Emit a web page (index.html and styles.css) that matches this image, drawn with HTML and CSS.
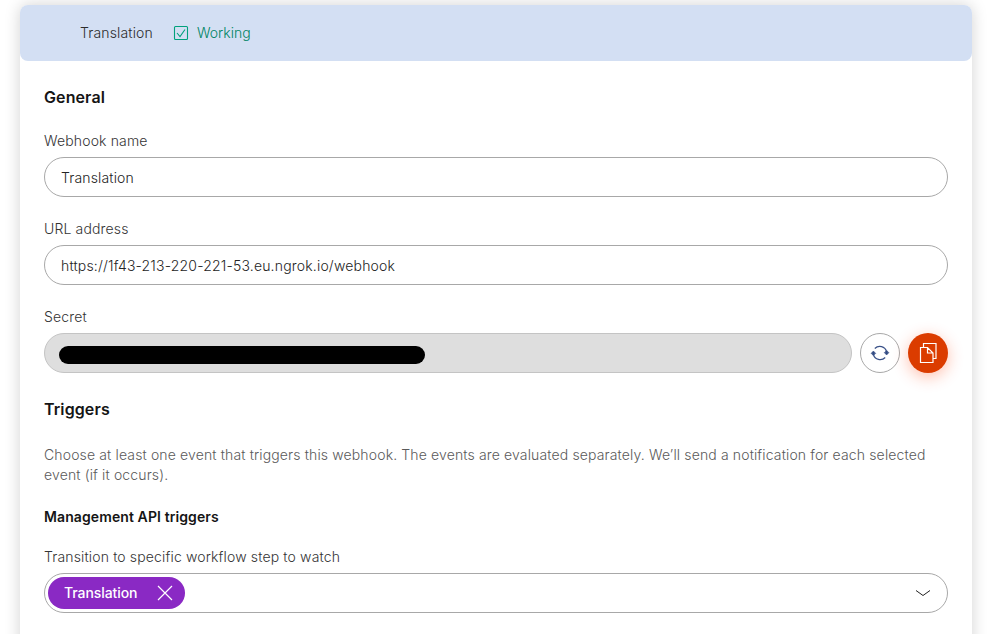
FILE: index.html
```html
<!DOCTYPE html>
<html lang="en">
<head>
<meta charset="utf-8">
<title>Webhook</title>
<link rel="stylesheet" href="styles.css">
</head>
<body>
<main class="card">
  <header class="bar">
    <span class="bar-name">Translation</span>
    <svg class="check" width="16" height="16" viewBox="0 0 16 16"><rect x="1.500" y="1.500" width="13" height="13" rx="1"/><path d="m4 8 3 3.500 5-7"/></svg>
    <span class="status">Working</span>
  </header>
  <div class="content">
    <h2>General</h2>
    <label>Webhook name</label>
    <div class="field">Translation</div>
    <label>URL address</label>
    <div class="field url">https://1f43-213-220-221-53.eu.ngrok.io/webhook</div>
    <label>Secret</label>
    <div class="secret-row">
      <div class="field disabled"><span class="redaction"></span></div>
      <button class="round" aria-label="Regenerate"><svg width="20" height="18" viewBox="0 0 20 18"><path d="M4.800 4.500A7 7 0 0 1 16.600 7.500M15.200 13.500A7 7 0 0 1 3.400 10.500"/><path class="head" d="M1 9.500 3.400 7l2.400 2.500-1.400.3v1.200h-2V9.800zM14.200 8.500l1.400-.3V7h2v1.200l1.400.3-2.400 2.500z"/></svg></button>
      <button class="round copy" aria-label="Copy"><svg width="18" height="20" viewBox="0 0 18 20"><path d="M1.500 4.500h7l5.500 5.500v9.500H1.500zM8.500 4.500V10H14M4.500 4.500V.500h12.500v15H14"/></svg></button>
    </div>
    <h2 class="triggers">Triggers</h2>
    <p>Choose at least one event that triggers this webhook. The events are evaluated separately. We’ll send a notification for each selected event (if it occurs).</p>
    <h3>Management API triggers</h3>
    <label>Transition to specific workflow step to watch</label>
    <div class="field select">
      <span class="tag">Translation<svg width="16" height="16" viewBox="0 0 16 16"><path d="m1 1 14 14M15 1 1 15"/></svg></span>
      <svg width="16" height="8" viewBox="0 0 16 8"><path d="m1 1.500 7 5 7-5"/></svg>
    </div>
  </div>
</main>
</body>
</html>
```
FILE: styles.css
```css
* { box-sizing: border-box; }
body { margin: 0; height: 634px; overflow: hidden; background: #fff; color: #151515; font: 14px/20px Inter, sans-serif; font-weight: 350; letter-spacing: .15px; }
svg { display: block; fill: none; flex: none; }
.card { width: 952px; height: 660px; margin: 5px 0 0 20px; border-radius: 8px; background: #fff; box-shadow: 0 0 16px rgba(0,0,0,.18); }
.bar { display: flex; align-items: center; height: 56px; padding-left: 60px; border-radius: 8px; background: #d3dff3; color: #2c2c2c; }
.bar-name { width: 93px; }
.check { stroke: #00a17c; stroke-width: 1.1; }
.status { margin-left: 8px; color: #008564; letter-spacing: 0; }
.content { padding: 24px 24px 0; }
h2 { margin: 0 0 22px; font-size: 16px; line-height: 24px; font-weight: 600; letter-spacing: .1px; }
label { display: block; height: 26px; color: #343434; }
.field { display: flex; align-items: center; height: 40px; padding: 2px 16px 0; margin-bottom: 22px; border: 1px solid #a8a8a8; border-radius: 20px; color: #242424; }
.url { letter-spacing: .18px; }
.secret-row { display: flex; gap: 8px; }
.disabled { flex: 1; margin: 0; padding: 4px 14px 0; background: #dedede; border-color: #c4c4c4; }
.redaction { width: 366px; height: 18px; border-radius: 9px; background: #000; }
.round { display: flex; align-items: center; justify-content: center; width: 40px; height: 40px; padding: 0; border: 1px solid #a8a8a8; border-radius: 50%; background: #fff; stroke: #3a5188; stroke-width: 1.2; }
.head { fill: #304a83; stroke-width: .6; }
.copy { border: 0; background: #db3c00; stroke: #fff; box-shadow: 0 4px 16px rgba(255,60,0,.32); }
.triggers { margin: 24px 0 24px; }
p { margin: 0 0 22px; color: #5a5a5a; letter-spacing: .14px; }
h3 { margin: 0 0 20px; font-size: 14px; line-height: 20px; font-weight: 600; letter-spacing: .1px; }
.select { margin: 0; justify-content: space-between; padding: 0 16px 0 3px; stroke: #222; }
.tag { display: flex; align-items: center; gap: 20px; width: 137px; height: 32px; padding: 0 12px 0 16px; border-radius: 16px; background: #8a29c4; color: #fff; stroke: #fff; stroke-width: 1.2; font-weight: 500; letter-spacing: -.08px; }
```
